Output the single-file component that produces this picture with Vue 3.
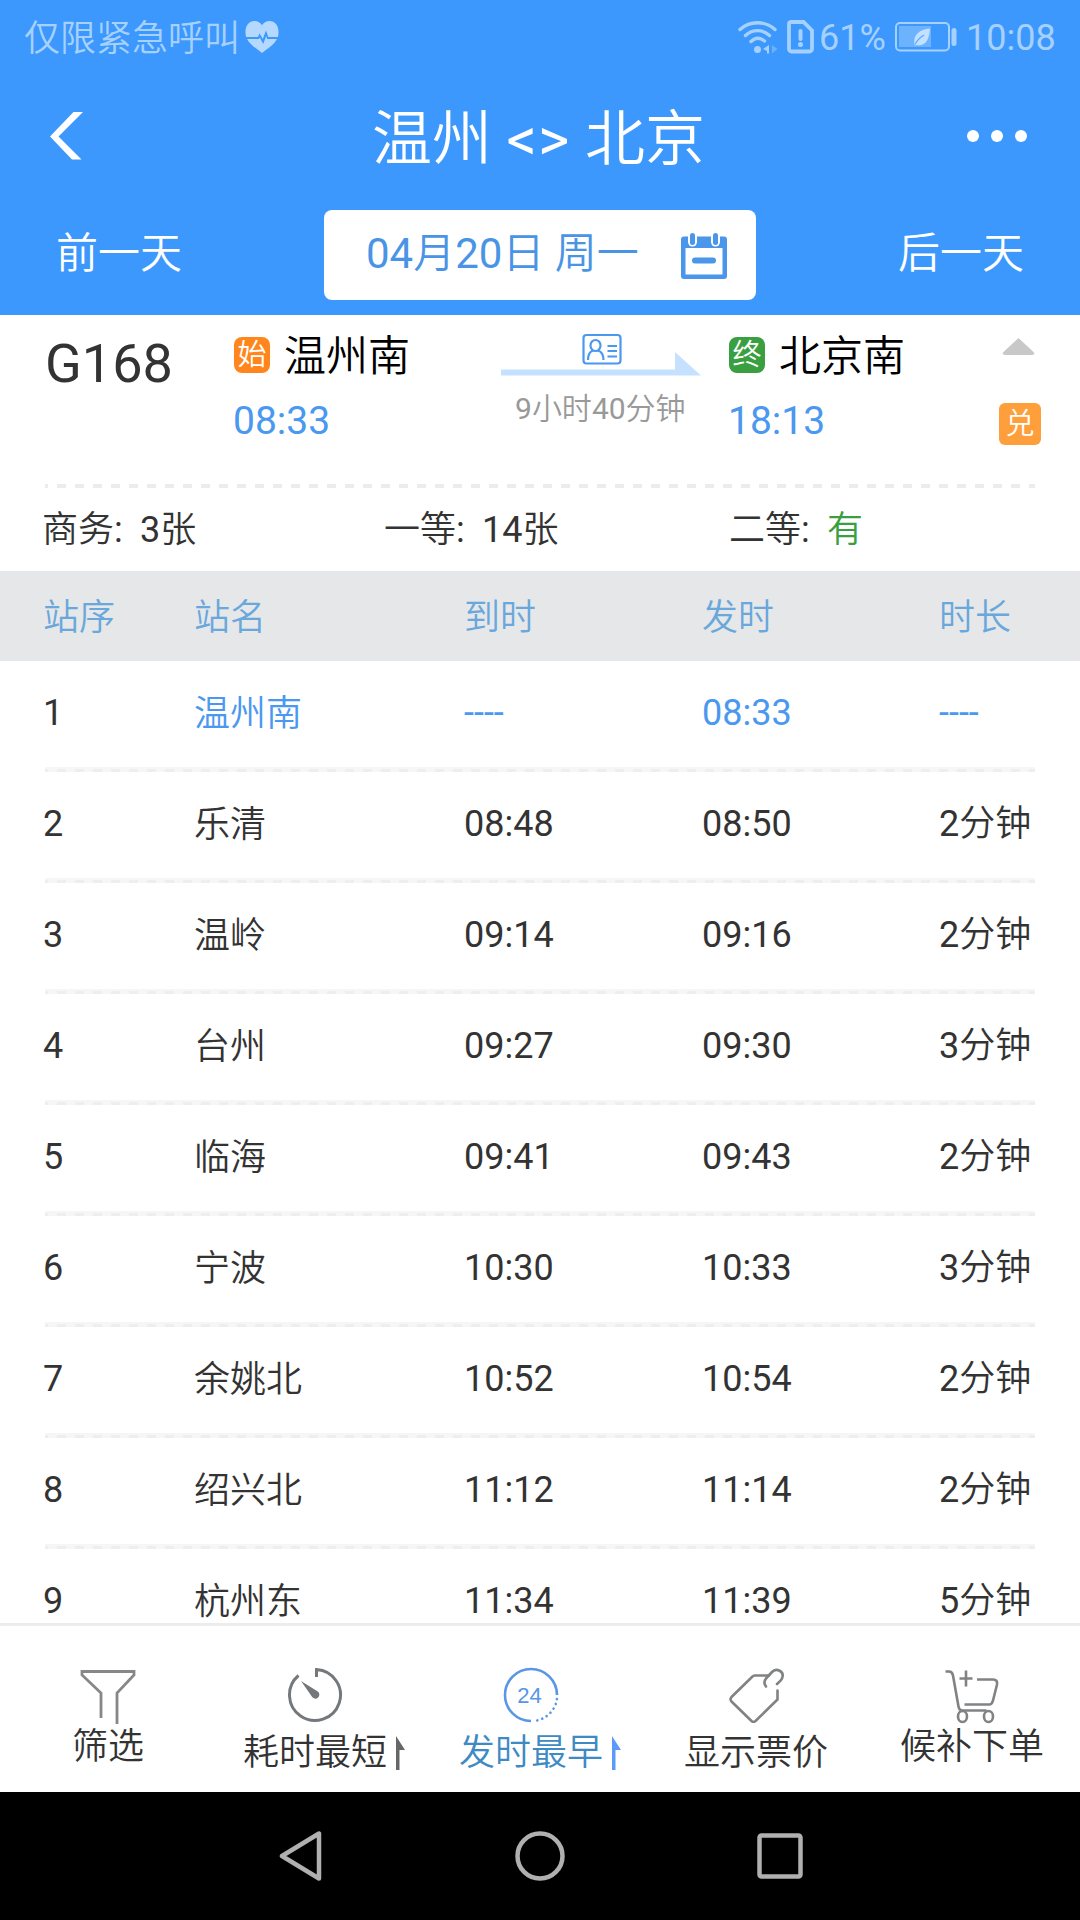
<template>
  <div class="screen">
    <header class="header">
      <div class="status-bar">
        <div class="carrier">
          <span>仅限紧急呼叫</span>
          <svg class="heart" width="34" height="32" viewBox="0 0 34 32">
            <path d="M1 16C-1 6 3 0 9.500 0c3.500 0 6 1.700 7.500 4.200C18.500 1.700 21 0 24.500 0 31 0 35 6 33 16H23.300l-2.300-6.500-3.200 8.500-3.300-5.500L13 16z" />
            <path d="M2 18h12l.8-1.500 3.400 6.500 3-8 1 3H32c-2.500 5-9 9.500-15 14C11 27.500 4.500 23 2 18z" />
          </svg>
        </div>
        <div class="indicators">
          <svg class="wifi" width="42" height="34" viewBox="0 0 42 34">
            <g fill="none" stroke="#a6d1ff" stroke-width="3.400" stroke-linecap="round">
              <path d="M2 9.500C12 .5 27 .5 37 9.500" />
              <path d="M7.500 15.500c7-6.500 17-6.500 24 0" />
              <path d="M13 21.500c4-4 9-4 13.500-.5" />
            </g>
            <circle cx="19.500" cy="29.500" r="3.500" fill="#a6d1ff" />
            <path d="M31 25v8.500h-2V31l-4-2z" fill="#a6d1ff" />
            <path d="M34 25l5.500 4-5.500 4.500z" fill="#6cb2fd" />
          </svg>
          <svg class="sim" width="28" height="34" viewBox="0 0 28 34">
            <path d="M3.500 2h13L25 10.500V29a2.500 2.500 0 0 1-2.500 2.500h-18A2.500 2.500 0 0 1 2 29V4a2 2 0 0 1 1.500-2z" fill="none" stroke="#a6d1ff" stroke-width="3.800" />
            <path d="M13.500 11v8" stroke="#a6d1ff" stroke-width="4" stroke-linecap="round" />
            <circle cx="13.500" cy="24.500" r="2.500" fill="#a6d1ff" />
          </svg>
          <span class="percent num">61%</span>
          <svg class="battery" width="62" height="30" viewBox="0 0 62 30">
            <rect x="1" y="1" width="53" height="27.500" rx="4" fill="none" stroke="#a6d1ff" stroke-width="2" />
            <rect x="4" y="4" width="32" height="21" fill="#6cb2fd" />
            <rect x="56.500" y="6" width="5" height="18" rx="2.500" fill="#a6d1ff" />
            <path d="M19.500 23C17.500 13 24 7.500 35 6.500 34.500 17 30.500 25 21.500 23l-1 .8z" fill="#c2e0ff" />
            <path d="M20 22.500c2-4 5-7 9-9.500" stroke="#5aa8fc" stroke-width="1.200" fill="none" />
          </svg>
          <span class="clock num">10:08</span>
        </div>
      </div>

      <div class="title-bar">
        <svg class="back" width="34" height="48" viewBox="0 0 34 48">
          <path d="M23.500 0H33L8.500 24.500 31.500 47.500H22L0 24.500z" fill="#fff" />
        </svg>
        <h1 class="title">温州 <span class="num">&lt;&gt;</span> 北京</h1>
        <div class="more"><i></i><i></i><i></i></div>
      </div>

      <div class="date-bar">
        <span class="day prev">前一天</span>
        <div class="date-box">
          <div class="date"><span class="num">04</span>月<span class="num">20</span>日 周一</div>
          <svg width="46" height="46" viewBox="0 0 46 46">
            <path d="M3 3.500h40a3 3 0 0 1 3 3V43a3 3 0 0 1-3 3H3a3 3 0 0 1-3-3V6.500a3 3 0 0 1 3-3zM4.500 15v26.500h37V15z" fill="#4a96ea" fill-rule="evenodd" />
            <rect x="7" y="-1" width="9" height="14.500" rx="4.500" fill="#fff" />
            <rect x="30" y="-1" width="9" height="14.500" rx="4.500" fill="#fff" />
            <rect x="9" y="0" width="5" height="12" rx="2.500" fill="#4a96ea" />
            <rect x="32" y="0" width="5" height="12" rx="2.500" fill="#4a96ea" />
            <rect x="11" y="24.500" width="24" height="6" rx="3" fill="#4a96ea" />
          </svg>
        </div>
        <span class="day next">后一天</span>
      </div>
    </header>

    <section class="train">
      <div class="train-no num">G168</div>
      <div class="station from">
        <div class="station-name"><b class="badge start">始</b><span>温州南</span></div>
        <div class="station-time num">08:33</div>
      </div>
      <div class="duration">
        <svg width="200" height="46" viewBox="0 0 200 46">
          <path d="M0 36.500h174V19l26 23.500H0z" fill="#c6e1ff" />
          <rect x="82.500" y="2" width="37" height="28.500" rx="3" fill="#fff" stroke="#4a98ef" stroke-width="2.200" />
          <g fill="none" stroke="#4a98ef" stroke-width="2.200">
            <ellipse cx="94.500" cy="12.500" rx="5" ry="5.500" />
            <path d="M87 27c0-5.500 2-8.500 5-9.500m5 0c3 1 5.500 4 5.500 9.500" />
            <path d="M106.500 13h9.500m-9.500 5h9.500m-9.500 5.500h9.500" />
          </g>
        </svg>
        <div class="duration-text"><span class="num">9</span>小时<span class="num">40</span>分钟</div>
      </div>
      <div class="station to">
        <div class="station-name"><b class="badge end">终</b><span>北京南</span></div>
        <div class="station-time num">18:13</div>
      </div>
      <div class="extra">
        <svg width="33" height="19" viewBox="0 0 33 19">
          <path d="M16.500 1.500L31.500 15.500a1.200 1.200 0 0 1-.8 2H2.300a1.200 1.200 0 0 1-.8-2z" fill="#c8c8c8" stroke="#c8c8c8" stroke-linejoin="round" />
        </svg>
        <b class="exchange">兑</b>
      </div>
    </section>

    <div class="dash-line"></div>

    <section class="seats">
      <div v-for="seat in seats" :key="seat.type" class="seat">
        <span class="seat-type">{{ seat.type }}<span class="num">:</span></span>
        <span v-if="seat.count"><span class="num">{{ seat.count }}</span>张</span>
        <span v-else class="plenty">有</span>
      </div>
    </section>

    <div class="stop-row stop-head">
      <span>站序</span><span>站名</span><span>到时</span><span>发时</span><span>时长</span>
    </div>

    <main class="stops">
      <div v-for="(stop, index) in stops" :key="stop.name" class="stop" :class="{ origin: index === 0 }">
        <div class="stop-row">
          <span class="order num">{{ index + 1 }}</span>
          <span class="stop-name">{{ stop.name }}</span>
          <span class="num">{{ stop.arrive }}</span>
          <span class="num">{{ stop.depart }}</span>
          <span v-if="stop.stay"><span class="num">{{ stop.stay }}</span>分钟</span>
          <span v-else class="num">----</span>
        </div>
        <div class="stop-line"></div>
      </div>
    </main>

    <nav class="tabs">
      <div class="tab short">
        <svg width="56" height="56" viewBox="0 0 56 56" fill="none" stroke="#858788" stroke-width="2.800">
          <path d="M21 49V24L2 6V2.500h52V6L37 24v31" />
        </svg>
        <div class="label">筛选</div>
      </div>
      <div class="tab">
        <div class="tab-body">
          <svg width="56" height="56" viewBox="0 0 56 56">
            <path d="M29.500 10V2.500A25.500 25.500 0 1 1 11.500 8.500" fill="none" stroke="#75787b" stroke-width="3" />
            <path d="M14 14l16.800 10.500a4 4 0 1 1-6 5z" fill="#75787b" />
          </svg>
          <div class="label">耗时最短</div>
        </div>
        <svg class="sort" width="9" height="34" viewBox="0 0 9 34"><path d="M0 0l9 14H3.500v20H0z" fill="#666" /></svg>
      </div>
      <div class="tab active">
        <div class="tab-body">
          <svg width="56" height="56" viewBox="0 0 56 56">
            <path d="M54 28A26 26 0 1 0 28 54" fill="none" stroke="#5a96e6" stroke-width="2.600" />
            <path d="M54 32A26 26 0 0 1 31 54" fill="none" stroke="#5a96e6" stroke-width="2.600" stroke-linecap="round" stroke-dasharray="0.100 5" />
            <text x="26.500" y="36" text-anchor="middle" class="clock-text">24</text>
          </svg>
          <div class="label">发时最早</div>
        </div>
        <svg class="sort" width="9" height="34" viewBox="0 0 9 34"><path d="M0 0l9 14H3.500v20H0z" fill="#5b9bf8" /></svg>
      </div>
      <div class="tab">
        <div class="tab-body">
          <svg width="56" height="56" viewBox="-1 0 56 56" fill="none" stroke="#808284" stroke-width="2.600" stroke-linecap="round" stroke-linejoin="round">
            <path d="M40 8.500H25.500a3 3 0 0 0-2 1L2.500 30a3.500 3.500 0 0 0 0 4.500l20 19.500a3 3 0 0 0 4 0L48.500 32.500V23.500" />
            <path d="M37 19.500c-2.500-3-1.500-6 0-8l6-6.500c4-4.500 13-1 10 6.500-1 2.500-3.500 4-5 5.500" />
          </svg>
          <div class="label">显示票价</div>
        </div>
      </div>
      <div class="tab short">
        <svg width="56" height="56" viewBox="0 0 56 56" fill="none" stroke="#808284" stroke-width="2.600">
          <path d="M1.500 2.500H5c2.500 0 3.500 1.500 4 4l5.500 31c.5 3 2 4 4 4h24" />
          <path d="M33 10.500h16c3.500 0 4.500 2 4 5l-4 16c-.6 2.500-1.500 4-4 4H20.500" />
          <path d="M22 1.500v16M15.500 9.500h13" />
          <ellipse cx="18.500" cy="47.500" rx="4.500" ry="5.500" />
          <ellipse cx="44.500" cy="47.500" rx="4.500" ry="5.500" />
        </svg>
        <div class="label">候补下单</div>
      </div>
    </nav>

    <footer class="system-nav">
      <svg width="44" height="50" viewBox="0 0 44 50"><path d="M40 2.500v45L3 25z" /></svg>
      <svg width="50" height="50" viewBox="0 0 50 50"><circle cx="25" cy="25" r="22.500" /></svg>
      <svg width="46" height="46" viewBox="0 0 46 46"><rect x="2.500" y="2.500" width="41" height="41" rx="2" /></svg>
    </footer>
  </div>
</template>

<script setup>
import { ref } from 'vue';

// without a count the seat is simply in stock
const seats = ref([
  { type: '商务', count: 3 },
  { type: '一等', count: 14 },
  { type: '二等' }
]);

const stops = ref([
  { name: '温州南', arrive: '----', depart: '08:33' },
  { name: '乐清', arrive: '08:48', depart: '08:50', stay: 2 },
  { name: '温岭', arrive: '09:14', depart: '09:16', stay: 2 },
  { name: '台州', arrive: '09:27', depart: '09:30', stay: 3 },
  { name: '临海', arrive: '09:41', depart: '09:43', stay: 2 },
  { name: '宁波', arrive: '10:30', depart: '10:33', stay: 3 },
  { name: '余姚北', arrive: '10:52', depart: '10:54', stay: 2 },
  { name: '绍兴北', arrive: '11:12', depart: '11:14', stay: 2 },
  { name: '杭州东', arrive: '11:34', depart: '11:39', stay: 5 }
]);
</script>

<style>
body {
  margin: 0;
}
</style>

<style scoped>
.screen {
  width: 1080px;
  height: 1920px;
  display: flex;
  flex-direction: column;
  overflow: hidden;
  background: #fff;
  color: #333;
  font-family: Roboto, 'Noto Sans CJK SC', sans-serif;
  font-size: 36px;
  font-weight: 350;
  line-height: 1;
  white-space: nowrap;
}

.num {
  font-weight: 400;
}

svg {
  display: block;
  flex: none;
}

/* header */
.header {
  height: 315px;
  flex: none;
  background: #3c98fc;
  color: #fff;
}
.status-bar {
  height: 74px;
  padding: 0 26px 0 24px;
  display: flex;
  align-items: center;
  justify-content: space-between;
  color: #a6d1ff;
}
.carrier {
  display: flex;
  align-items: center;
}
.carrier span {
  padding-top: 3px;
}
.heart {
  margin-left: 5px;
  fill: #b5d8ff;
}
.indicators {
  display: flex;
  align-items: center;
}
.percent,
.clock {
  padding-top: 2px;
}
.clock {
  width: 88px;
}
.percent {
  width: 66px;
}
.sim {
  margin: 0 4px 0 7px;
}
.battery {
  margin: 0 9px 0 10px;
}
.title-bar {
  height: 124px;
  padding: 0 53px 0 50px;
  display: grid;
  grid-template-columns: 1fr auto 1fr;
  align-items: center;
}
.title {
  margin: 0;
  padding-top: 8px;
  font-size: 60px;
  font-weight: inherit;
}
.title .num {
  letter-spacing: 1px;
}
.more {
  display: flex;
  justify-content: flex-end;
  gap: 12px;
}
.more i {
  width: 12px;
  height: 12px;
  border-radius: 50%;
  background: #fff;
}
.date-bar {
  height: 90px;
  margin-top: 12px;
  padding: 0 56px;
  display: flex;
  align-items: center;
  justify-content: space-between;
  font-size: 42px;
}
.day {
  margin-bottom: 2px;
}
.date-box {
  width: 432px;
  height: 90px;
  padding: 0 29px 0 42px;
  box-sizing: border-box;
  border-radius: 8px;
  display: flex;
  align-items: center;
  justify-content: space-between;
  background: #fff;
  color: #4a94e6;
}
.date {
  margin-bottom: 3px;
}
.date-box svg {
  margin-top: 2px;
}

/* train summary */
.train {
  height: 169px;
  flex: none;
  padding: 0 39px 0 45px;
  box-sizing: border-box;
  display: flex;
  align-items: flex-start;
}
.train-no {
  width: 189px;
  padding-top: 22px;
  font-size: 54px;
}
.station-name {
  display: flex;
  align-items: center;
  margin-top: 19px;
  height: 42px;
  font-size: 42px;
  color: #000;
}
.station-name span {
  padding-top: 4px;
}
.station-time {
  margin: 26px 0 0 -1px;
  font-size: 39px;
  color: #4a98ef;
}
.badge {
  width: 36px;
  height: 36px;
  margin-right: 14px;
  border-radius: 8px;
  color: #fff;
  font-size: 29px;
  font-weight: inherit;
  line-height: 37px;
  text-align: center;
}
.badge.start {
  background: #ff861c;
}
.badge.end {
  background: #3a9f40;
}
.from {
  width: 267px;
}
.duration {
  width: 228px;
  padding-top: 18px;
}
.duration-text {
  margin: 15px 0 0 14px;
  font-size: 30px;
  color: #999;
}
.extra {
  margin-left: auto;
  padding-top: 22px;
  display: flex;
  flex-direction: column;
  align-items: center;
}
.extra svg {
  margin-right: 4px;
}
.exchange {
  width: 42px;
  height: 42px;
  margin-top: 47px;
  border-radius: 6px;
  background: #ff9f3c;
  color: #fff;
  font-size: 29px;
  font-weight: inherit;
  line-height: 42px;
  text-align: center;
}
.dash-line {
  height: 4px;
  flex: none;
  margin: 0 45px;
  background: repeating-linear-gradient(90deg, #ececec 0 3px, transparent 3px 12px, #ececec 12px 18px);
}

/* seats */
.seats {
  height: 83px;
  flex: none;
  padding: 1px 0 0 42px;
  box-sizing: border-box;
  display: grid;
  grid-template-columns: 342px 345px 1fr;
  align-items: center;
}
.seat {
  display: flex;
}
.seat-type {
  width: 98px;
}
.plenty {
  color: #3a9f40;
}

/* stops */
.stop-row {
  display: grid;
  grid-template-columns: 151px 270px 238px 237px 1fr;
  align-items: center;
  padding: 0 0 2px 43px;
  box-sizing: border-box;
  height: 106px;
}
.stop-head {
  height: 90px;
  flex: none;
  padding: 4px 0 0 43px;
  background: #e6e7e9;
  color: #6aa8dc;
}
.stop-name {
  padding-top: 2px;
}
.stops {
  height: 962px;
  flex: none;
  overflow: hidden;
}
.origin {
  color: #4a98ef;
}
.order {
  color: #333;
}
.stop-line {
  height: 5px;
  margin: 0 45px;
  background: repeating-linear-gradient(90deg, #eee 0 3px, transparent 3px 12px, #eee 12px 18px) 0 2px / 100% 3px no-repeat, #f6f6f6;
}

/* bottom tabs */
.tabs {
  height: 169px;
  flex: none;
  box-sizing: border-box;
  border-top: 3px solid #ececec;
  display: grid;
  grid-template-columns: repeat(5, 1fr);
}
.tab {
  padding-top: 41px;
  display: flex;
  justify-content: center;
}
.tab.short {
  padding-top: 43px;
  flex-direction: column;
  justify-content: flex-start;
  align-items: center;
}
.tab-body {
  display: flex;
  flex-direction: column;
  align-items: center;
}
.label {
  margin-top: 12px;
}
.short .label {
  margin-top: 4px;
}
.sort {
  margin: 69px 0 0 9px;
}
.active {
  color: #3d8ac4;
}
.clock-text {
  font: 22px 'Liberation Sans', sans-serif;
  fill: #5a96e6;
}

/* system navigation */
.system-nav {
  height: 128px;
  flex: none;
  padding-left: 2px;
  box-sizing: border-box;
  display: flex;
  align-items: center;
  justify-content: center;
  gap: 192px;
  background: #000;
}
.system-nav svg {
  fill: none;
  stroke: #b0b0b0;
  stroke-width: 4.500;
  stroke-linejoin: round;
}
</style>
